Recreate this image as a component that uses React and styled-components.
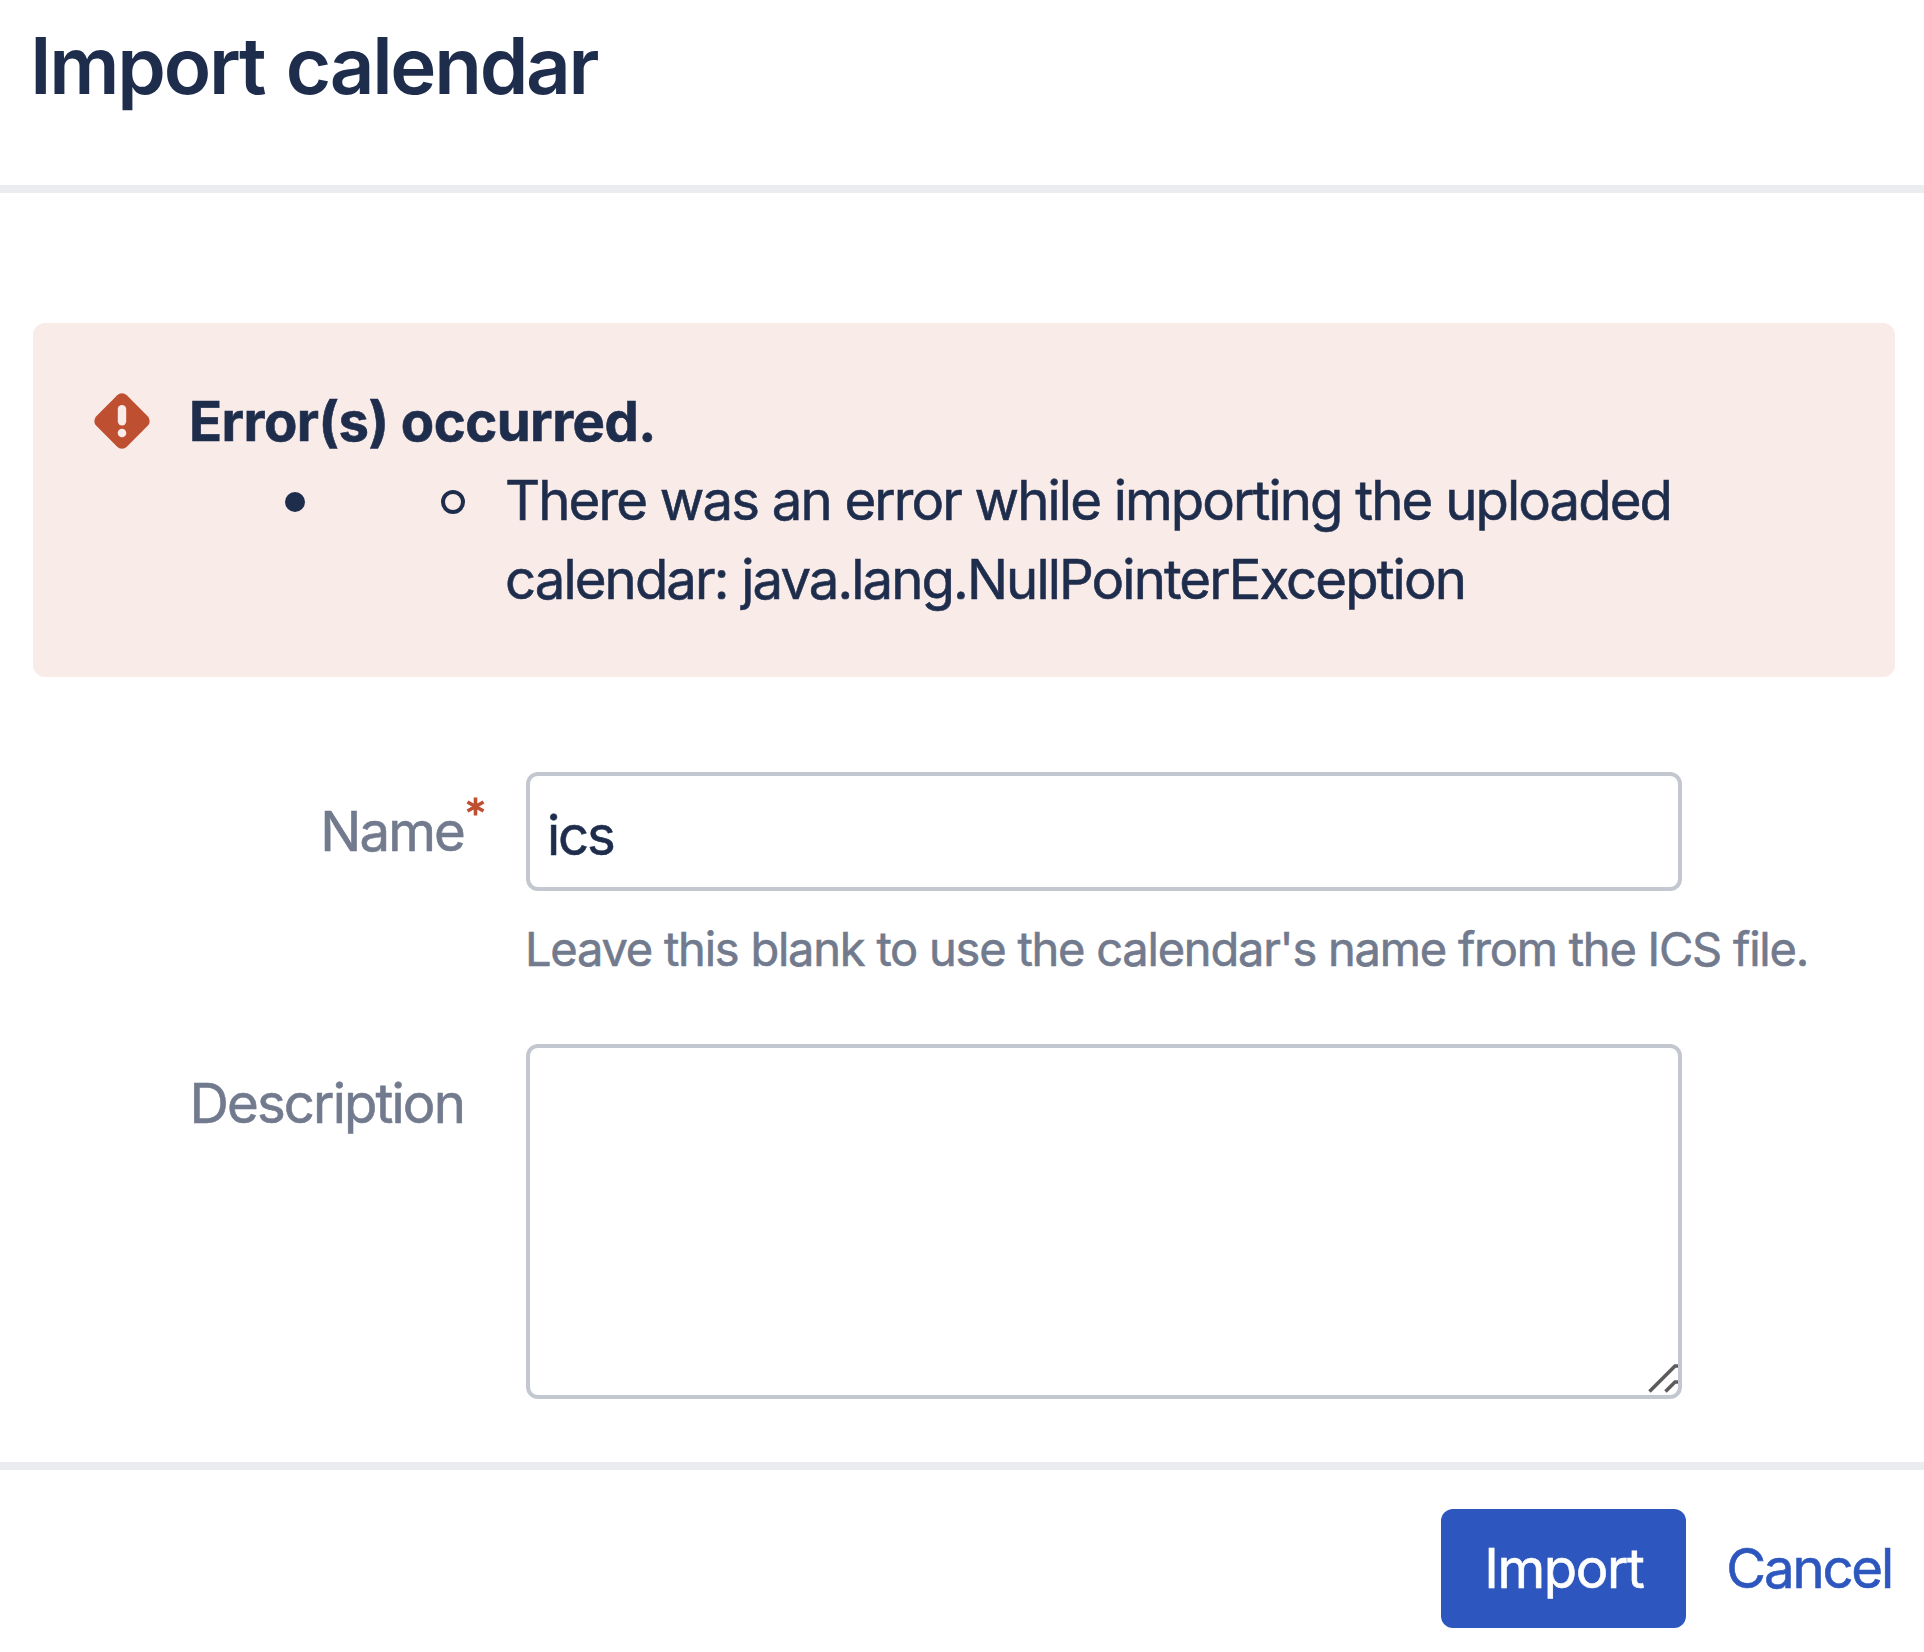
import React from "react";
import styled, { createGlobalStyle } from "styled-components";

const color = {
  text: "#1f2d4d",
  subtle: "#727a8e",
  border: "#c3c8d0",
  rule: "#ebecf0",
  danger: "#bf4f31",
  dangerBg: "#f8ebe8",
  primary: "#2d57be"
};

const GlobalStyle = createGlobalStyle`
  * {
    box-sizing: border-box;
  }

  body {
    margin: 0;
    background: #fff;
    color: ${color.text};
    font-family: Inter, "Liberation Sans", sans-serif;
    font-size: 54.5px;
    font-weight: 400;
    line-height: 79px;
    letter-spacing: -0.04em;
    -webkit-text-stroke: 0.6px;
  }
`;

const Dialog = styled.section`
  display: flex;
  flex-direction: column;
  width: 100%;
  height: 1652px;
  overflow: hidden;
`;

const Header = styled.header`
  height: 193px;
  padding: 18px 30px 0;
  border-bottom: 8px solid ${color.rule};
`;

const Title = styled.h2`
  margin: 0;
  font-size: 78px;
  font-weight: 600;
  line-height: 96px;
  letter-spacing: -0.029em;
  word-spacing: 4px;
  -webkit-text-stroke: 0;
`;

const Body = styled.div`
  height: 1277px;
  padding: 130px 29px 0 33px;
  border-bottom: 8px solid ${color.rule};
`;

const Alert = styled.div`
  display: grid;
  grid-template-columns: 56px 1fr;
  column-gap: 39px;
  height: 354px;
  padding: 59px 61px;
  border-radius: 12px;
  background: ${color.dangerBg};
`;

const AlertIcon = styled.svg`
  width: 56px;
  height: 56px;
  margin-top: 11px;
`;

const AlertTitle = styled.div`
  font-weight: 700;
  letter-spacing: -0.01em;
`;

const Errors = styled.ul`
  display: flex;
  margin: 0;
  padding: 0 0 0 96px;
  list-style: none;
`;

const Marker = styled.span`
  flex: none;
  width: ${p => (p.$hollow ? 24 : 20)}px;
  height: ${p => (p.$hollow ? 24 : 20)}px;
  margin: ${p => (p.$hollow ? "29px 40px 0 136px" : "31px 0 0")};
  border: ${p => (p.$hollow ? 4 : 10)}px solid ${color.text};
  border-radius: 50%;
`;

const Message = styled.li`
  letter-spacing: -0.035em;
  white-space: nowrap;
  word-spacing: 0.3px;
`;

const Form = styled.form`
  display: grid;
  grid-template-columns: 431px 1156px;
  column-gap: 62px;
  row-gap: 56px;
  margin-top: 95px;
`;

const Label = styled.label`
  position: relative;
  padding-top: 20px;
  color: ${color.subtle};
  letter-spacing: -0.034em;
  text-align: right;
`;

const Required = styled.svg`
  position: absolute;
  top: 25px;
  right: -21px;
  width: 19px;
  height: 19px;
`;

const Input = styled.input`
  display: block;
  width: 100%;
  height: 119px;
  padding: 7px 17px 0;
  border: 4px solid ${color.border};
  border-radius: 12px;
  outline: none;
  background: #fff;
  color: inherit;
  font: inherit;
  letter-spacing: inherit;
`;

const Hint = styled.div`
  margin: 18px 0 0 -1px;
  color: ${color.subtle};
  font-size: 47px;
  letter-spacing: -0.026em;
  white-space: nowrap;
`;

const TextareaWrapper = styled.div`
  position: relative;
  height: 355px;
`;

const Textarea = styled.textarea`
  display: block;
  width: 100%;
  height: 100%;
  padding: 16px 18px;
  border: 4px solid ${color.border};
  border-radius: 12px;
  outline: none;
  background: #fff;
  color: inherit;
  font: inherit;
  resize: none;
`;

const Grip = styled.svg`
  position: absolute;
  right: 4px;
  bottom: 4px;
  width: 30px;
  height: 32px;
`;

const Footer = styled.footer`
  display: flex;
  justify-content: flex-end;
  padding: 39px 32px 0 0;
`;

const Button = styled.button`
  height: 119px;
  padding: 0;
  border: 0;
  border-radius: 12px;
  background: none;
  color: ${color.primary};
  font: inherit;
  letter-spacing: inherit;
`;

const PrimaryButton = styled(Button)`
  width: 245px;
  margin-right: 40px;
  background: ${color.primary};
  color: #fff;
  letter-spacing: -0.026em;
`;

const ErrorIcon = () => (
  <AlertIcon viewBox="0 0 56 56">
    <path
      d="M23.2 2.3a6.8 6.8 0 0 1 9.6 0l20.9 20.9a6.8 6.8 0 0 1 0 9.6L32.8 53.7a6.8 6.8 0 0 1-9.6 0L2.3 32.8a6.8 6.8 0 0 1 0-9.6z"
      fill={color.danger}
    />
    <rect x="23.8" y="12" width="8.4" height="20.5" rx="4.2" fill={color.dangerBg} />
    <circle cx="28" cy="40" r="4.3" fill={color.dangerBg} />
  </AlertIcon>
);

const RequiredMark = () => (
  <Required viewBox="0 0 19 19">
    <path d="M9.5 0.5v18M1.5 5l16 9M17.5 5l-16 9" stroke={color.danger} strokeWidth="3.6" />
  </Required>
);

const ResizeGrip = () => (
  <Grip viewBox="0 0 30 32">
    <path d="M1.5 28.5L27 3H30M17.5 28.5L27 19H30" fill="none" stroke="#5c5c5c" strokeWidth="3.6" />
  </Grip>
);

const App = () => {
  return (
    <Dialog>
      <GlobalStyle />

      <Header>
        <Title>Import calendar</Title>
      </Header>

      <Body>
        <Alert>
          <ErrorIcon />
          <div>
            <AlertTitle>Error(s) occurred.</AlertTitle>
            <Errors>
              <Marker />
              <Marker $hollow />
              <Message>
                There was an error while importing the uploaded
                <br />
                calendar: java.lang.NullPointerException
              </Message>
            </Errors>
          </div>
        </Alert>

        <Form>
          <Label htmlFor="name">
            Name
            <RequiredMark />
          </Label>
          <div>
            <Input id="name" defaultValue="ics" />
            <Hint>Leave this blank to use the calendar's name from the ICS file.</Hint>
          </div>

          <Label htmlFor="description">Description</Label>
          <TextareaWrapper>
            <Textarea id="description" />
            <ResizeGrip />
          </TextareaWrapper>
        </Form>
      </Body>

      <Footer>
        <PrimaryButton type="button">Import</PrimaryButton>
        <Button type="button">Cancel</Button>
      </Footer>
    </Dialog>
  );
};

export default App;
